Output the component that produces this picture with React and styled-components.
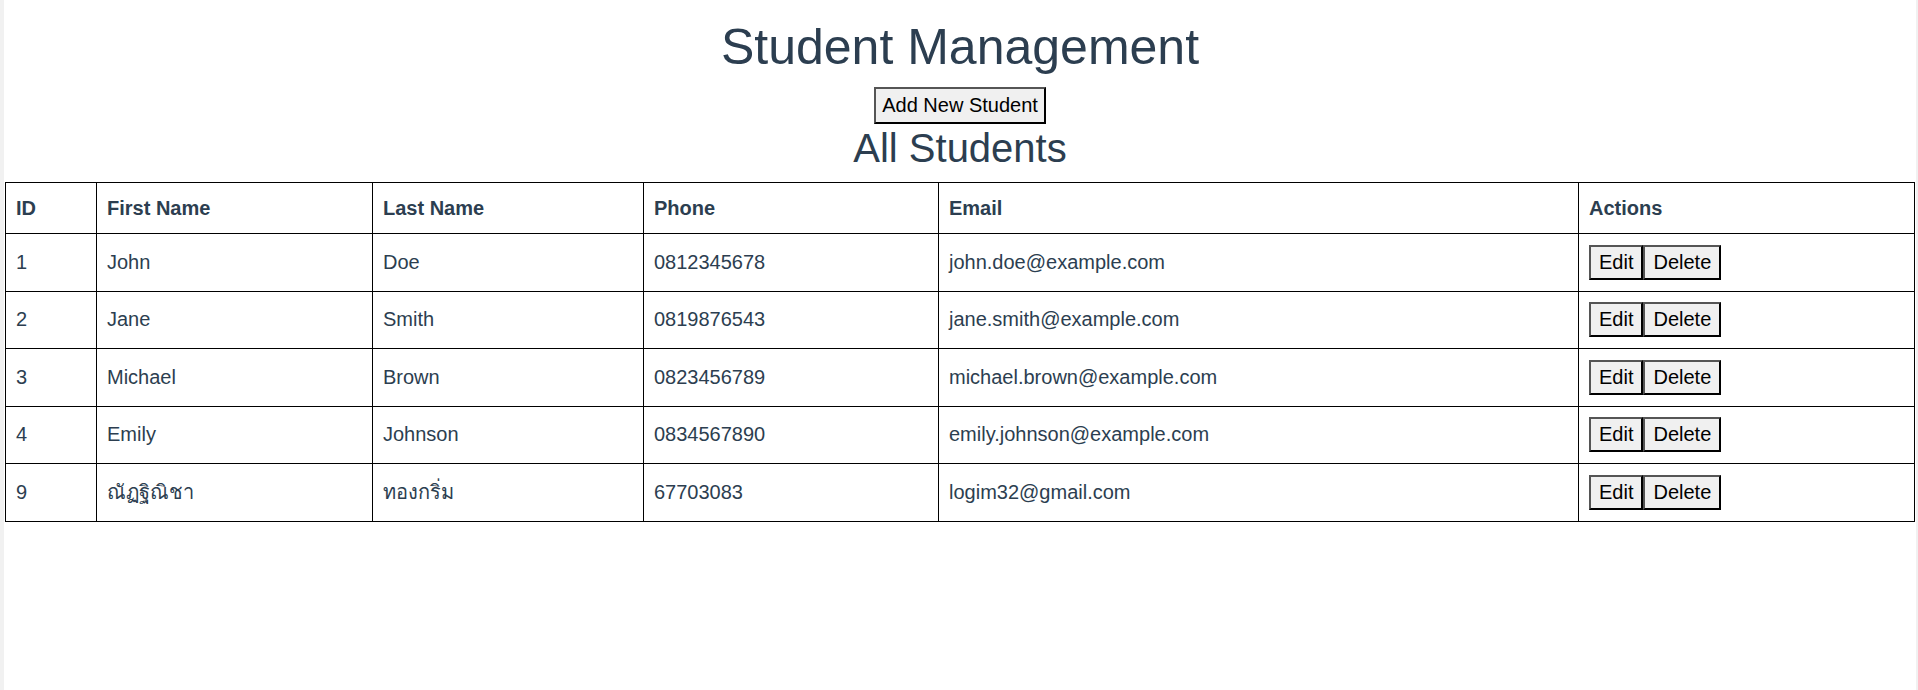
import React from "react";
import styled, { createGlobalStyle } from "styled-components";

const GlobalStyle = createGlobalStyle`
  html, body {
    margin: 0;
    padding: 0;
    background: #f1f1f1;
  }
  body {
    font-family: "Liberation Sans", Arial, "Noto Sans", sans-serif;
    font-size: 20px;
    color: #2c3e50;
  }
`;

const Page = styled.div`
  background: #ffffff;
  margin: 0 2px 0 4px;
  min-height: 690px;
  padding-top: 18px;
  display: flex;
  flex-direction: column;
  align-items: center;
`;

const Title = styled.h1`
  font-size: 50px;
  font-weight: 400;
  line-height: normal;
  margin: 0 0 11px;
  color: #2c3e50;
`;

const Button = styled.button`
  font-family: "Liberation Sans", Arial, sans-serif;
  font-size: 20px;
  line-height: normal;
  color: #000;
  background: #f0f0f0;
  border-width: 2px;
  border-style: solid;
  border-color: #555 #000 #000 #555;
  padding: ${(p) => (p.$big ? "5px 6px" : "4px 8px")};
  margin: 0;
  cursor: pointer;
`;

const SubTitle = styled.h2`
  font-size: 40px;
  font-weight: 400;
  line-height: normal;
  margin: 2px 0 11px;
  color: #2c3e50;
`;

const Table = styled.table`
  width: calc(100% - 2px);
  margin: 0 1px;
  border-collapse: collapse;
  table-layout: fixed;
  color: #2c3e50;
`;

const Th = styled.th`
  border: 1px solid #000;
  padding: 14px 10px 13px;
  text-align: left;
  font-weight: 700;
  font-size: 20px;
  line-height: 23px;
`;

const Td = styled.td`
  border: 1px solid #000;
  padding: 10px;
  text-align: left;
  font-size: 20px;
  line-height: 23px;
  height: 36.5px;
  vertical-align: middle;
`;

const ActionsCell = styled.div`
  display: flex;
`;

const students = [
  { id: 1, first: "John", last: "Doe", phone: "0812345678", email: "john.doe@example.com" },
  { id: 2, first: "Jane", last: "Smith", phone: "0819876543", email: "jane.smith@example.com" },
  { id: 3, first: "Michael", last: "Brown", phone: "0823456789", email: "michael.brown@example.com" },
  { id: 4, first: "Emily", last: "Johnson", phone: "0834567890", email: "emily.johnson@example.com" },
  { id: 9, first: "ณัฏฐิณิชา", last: "ทองกริ่ม", phone: "67703083", email: "logim32@gmail.com" },
];

const widths = [91, 276, 271, 295, 640, 336];

export default function App() {
  return (
    <>
      <GlobalStyle />
      <Page>
        <Title>Student Management</Title>
        <Button $big>Add New Student</Button>
        <SubTitle>All Students</SubTitle>
        <Table>
          <colgroup>
            {widths.map((w, i) => (
              <col key={i} style={{ width: w }} />
            ))}
          </colgroup>
          <thead>
            <tr>
              <Th>ID</Th>
              <Th>First Name</Th>
              <Th>Last Name</Th>
              <Th>Phone</Th>
              <Th>Email</Th>
              <Th>Actions</Th>
            </tr>
          </thead>
          <tbody>
            {students.map((s) => (
              <tr key={s.id}>
                <Td>{s.id}</Td>
                <Td>{s.first}</Td>
                <Td>{s.last}</Td>
                <Td>{s.phone}</Td>
                <Td>{s.email}</Td>
                <Td>
                  <ActionsCell>
                    <Button>Edit</Button>
                    <Button>Delete</Button>
                  </ActionsCell>
                </Td>
              </tr>
            ))}
          </tbody>
        </Table>
      </Page>
    </>
  );
}
